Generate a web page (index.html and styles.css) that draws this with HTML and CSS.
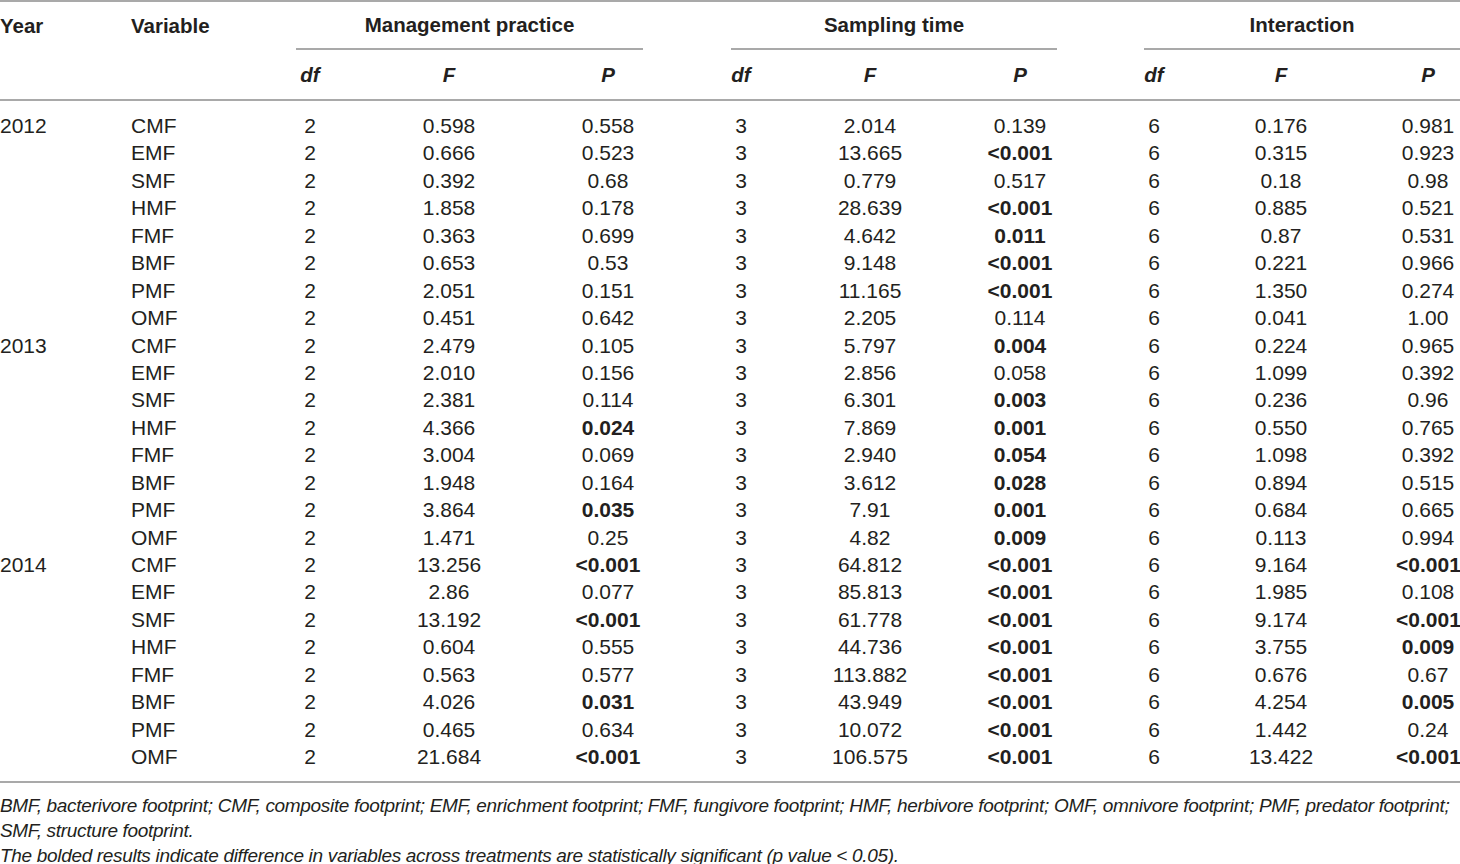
FILE: index.html
```html
<!DOCTYPE html>
<html lang="en">
<head>
    <meta charset="UTF-8">
    <title>Nematode metabolic footprints – ANOVA</title>
    <meta name="viewport" content="width=device-width, initial-scale=1">
    <link rel="stylesheet" href="styles.css">
</head>
<body>
    <table class="anova">
        <colgroup>
            <col class="c-year"><col class="c-var">
            <col class="c-df1"><col class="c-f1"><col class="c-p1">
            <col class="c-df2"><col class="c-f2"><col class="c-p2">
            <col class="c-df3"><col class="c-f3"><col class="c-p3">
        </colgroup>
        <thead>
            <tr class="head-top">
                <th class="left">Year</th>
                <th class="left">Variable</th>
                <th colspan="3"><div class="grp grp-mp">Management practice</div></th>
                <th colspan="3"><div class="grp grp-st">Sampling time</div></th>
                <th colspan="3"><div class="grp grp-in">Interaction</div></th>
            </tr>
            <tr class="head-sub">
                <th></th>
                <th></th>
                <th class="df"><i>df</i></th><th><i>F</i></th><th><i>P</i></th>
                <th class="df"><i>df</i></th><th><i>F</i></th><th><i>P</i></th>
                <th class="df"><i>df</i></th><th><i>F</i></th><th class="last"><i>P</i></th>
            </tr>
        </thead>
        <tbody>
            <tr class="first">
                <td class="left">2012</td><td class="left">CMF</td>
                <td>2</td><td>0.598</td><td>0.558</td>
                <td>3</td><td>2.014</td><td>0.139</td>
                <td>6</td><td>0.176</td><td class="last">0.981</td>
            </tr>
            <tr>
                <td></td><td class="left">EMF</td>
                <td>2</td><td>0.666</td><td>0.523</td>
                <td>3</td><td>13.665</td><td><b>&lt;0.001</b></td>
                <td>6</td><td>0.315</td><td class="last">0.923</td>
            </tr>
            <tr>
                <td></td><td class="left">SMF</td>
                <td>2</td><td>0.392</td><td>0.68</td>
                <td>3</td><td>0.779</td><td>0.517</td>
                <td>6</td><td>0.18</td><td class="last">0.98</td>
            </tr>
            <tr>
                <td></td><td class="left">HMF</td>
                <td>2</td><td>1.858</td><td>0.178</td>
                <td>3</td><td>28.639</td><td><b>&lt;0.001</b></td>
                <td>6</td><td>0.885</td><td class="last">0.521</td>
            </tr>
            <tr>
                <td></td><td class="left">FMF</td>
                <td>2</td><td>0.363</td><td>0.699</td>
                <td>3</td><td>4.642</td><td><b>0.011</b></td>
                <td>6</td><td>0.87</td><td class="last">0.531</td>
            </tr>
            <tr>
                <td></td><td class="left">BMF</td>
                <td>2</td><td>0.653</td><td>0.53</td>
                <td>3</td><td>9.148</td><td><b>&lt;0.001</b></td>
                <td>6</td><td>0.221</td><td class="last">0.966</td>
            </tr>
            <tr>
                <td></td><td class="left">PMF</td>
                <td>2</td><td>2.051</td><td>0.151</td>
                <td>3</td><td>11.165</td><td><b>&lt;0.001</b></td>
                <td>6</td><td>1.350</td><td class="last">0.274</td>
            </tr>
            <tr>
                <td></td><td class="left">OMF</td>
                <td>2</td><td>0.451</td><td>0.642</td>
                <td>3</td><td>2.205</td><td>0.114</td>
                <td>6</td><td>0.041</td><td class="last">1.00</td>
            </tr>
            <tr>
                <td class="left">2013</td><td class="left">CMF</td>
                <td>2</td><td>2.479</td><td>0.105</td>
                <td>3</td><td>5.797</td><td><b>0.004</b></td>
                <td>6</td><td>0.224</td><td class="last">0.965</td>
            </tr>
            <tr>
                <td></td><td class="left">EMF</td>
                <td>2</td><td>2.010</td><td>0.156</td>
                <td>3</td><td>2.856</td><td>0.058</td>
                <td>6</td><td>1.099</td><td class="last">0.392</td>
            </tr>
            <tr>
                <td></td><td class="left">SMF</td>
                <td>2</td><td>2.381</td><td>0.114</td>
                <td>3</td><td>6.301</td><td><b>0.003</b></td>
                <td>6</td><td>0.236</td><td class="last">0.96</td>
            </tr>
            <tr>
                <td></td><td class="left">HMF</td>
                <td>2</td><td>4.366</td><td><b>0.024</b></td>
                <td>3</td><td>7.869</td><td><b>0.001</b></td>
                <td>6</td><td>0.550</td><td class="last">0.765</td>
            </tr>
            <tr>
                <td></td><td class="left">FMF</td>
                <td>2</td><td>3.004</td><td>0.069</td>
                <td>3</td><td>2.940</td><td><b>0.054</b></td>
                <td>6</td><td>1.098</td><td class="last">0.392</td>
            </tr>
            <tr>
                <td></td><td class="left">BMF</td>
                <td>2</td><td>1.948</td><td>0.164</td>
                <td>3</td><td>3.612</td><td><b>0.028</b></td>
                <td>6</td><td>0.894</td><td class="last">0.515</td>
            </tr>
            <tr>
                <td></td><td class="left">PMF</td>
                <td>2</td><td>3.864</td><td><b>0.035</b></td>
                <td>3</td><td>7.91</td><td><b>0.001</b></td>
                <td>6</td><td>0.684</td><td class="last">0.665</td>
            </tr>
            <tr>
                <td></td><td class="left">OMF</td>
                <td>2</td><td>1.471</td><td>0.25</td>
                <td>3</td><td>4.82</td><td><b>0.009</b></td>
                <td>6</td><td>0.113</td><td class="last">0.994</td>
            </tr>
            <tr>
                <td class="left">2014</td><td class="left">CMF</td>
                <td>2</td><td>13.256</td><td><b>&lt;0.001</b></td>
                <td>3</td><td>64.812</td><td><b>&lt;0.001</b></td>
                <td>6</td><td>9.164</td><td class="last"><b>&lt;0.001</b></td>
            </tr>
            <tr>
                <td></td><td class="left">EMF</td>
                <td>2</td><td>2.86</td><td>0.077</td>
                <td>3</td><td>85.813</td><td><b>&lt;0.001</b></td>
                <td>6</td><td>1.985</td><td class="last">0.108</td>
            </tr>
            <tr>
                <td></td><td class="left">SMF</td>
                <td>2</td><td>13.192</td><td><b>&lt;0.001</b></td>
                <td>3</td><td>61.778</td><td><b>&lt;0.001</b></td>
                <td>6</td><td>9.174</td><td class="last"><b>&lt;0.001</b></td>
            </tr>
            <tr>
                <td></td><td class="left">HMF</td>
                <td>2</td><td>0.604</td><td>0.555</td>
                <td>3</td><td>44.736</td><td><b>&lt;0.001</b></td>
                <td>6</td><td>3.755</td><td class="last"><b>0.009</b></td>
            </tr>
            <tr>
                <td></td><td class="left">FMF</td>
                <td>2</td><td>0.563</td><td>0.577</td>
                <td>3</td><td>113.882</td><td><b>&lt;0.001</b></td>
                <td>6</td><td>0.676</td><td class="last">0.67</td>
            </tr>
            <tr>
                <td></td><td class="left">BMF</td>
                <td>2</td><td>4.026</td><td><b>0.031</b></td>
                <td>3</td><td>43.949</td><td><b>&lt;0.001</b></td>
                <td>6</td><td>4.254</td><td class="last"><b>0.005</b></td>
            </tr>
            <tr>
                <td></td><td class="left">PMF</td>
                <td>2</td><td>0.465</td><td>0.634</td>
                <td>3</td><td>10.072</td><td><b>&lt;0.001</b></td>
                <td>6</td><td>1.442</td><td class="last">0.24</td>
            </tr>
            <tr class="final">
                <td></td><td class="left">OMF</td>
                <td>2</td><td>21.684</td><td><b>&lt;0.001</b></td>
                <td>3</td><td>106.575</td><td><b>&lt;0.001</b></td>
                <td>6</td><td>13.422</td><td class="last"><b>&lt;0.001</b></td>
            </tr>
        </tbody>
    </table>

    <div class="notes">
        <p><span class="line">BMF, bacterivore footprint; CMF, composite footprint; EMF, enrichment footprint; FMF, fungivore footprint; HMF, herbivore footprint; OMF, omnivore footprint; PMF, predator footprint;</span><br>SMF, structure footprint.</p>
        <p>The bolded results indicate difference in variables across treatments are statistically significant (p value &lt; 0.05).</p>
    </div>
</body>
</html>
```

FILE: styles.css
```css
body {
    margin: 0;
    padding: 0;
    background: #fff;
    color: #231f20;
    font-family: 'Liberation Sans', Arial, sans-serif;
}
.anova {
    width: 1460px;
    table-layout: fixed;
    border-collapse: collapse;
    border-spacing: 0;
    border-top: 2px solid #a9a9a9;
}
.c-year { width: 131px; }
.c-var { width: 109px; }
.c-df1 { width: 140px; }
.c-f1 { width: 138px; }
.c-p1 { width: 180px; }
.c-df2 { width: 86px; }
.c-f2 { width: 172px; }
.c-p2 { width: 128px; }
.c-df3 { width: 140px; }
.c-f3 { width: 114px; }
.c-p3 { width: 122px; }

th, td {
    padding: 0;
    text-align: center;
    white-space: nowrap;
}
th {
    font-weight: bold;
    font-size: 20.5px;
}
.left {
    text-align: left;
}
.last {
    padding-left: 58px;
}

/* header rows */
.head-top th {
    height: 48px;
    line-height: 48px;
    vertical-align: top;
}
.grp {
    border-bottom: 2px solid #a9a9a9;
    line-height: 46px;
}
.grp-mp { margin: 0 55px 0 56px; }
.grp-st { margin: 0 27px 0 33px; }
.grp-in { margin: 0 0 0 60px; }
.head-sub th {
    height: 49px;
    line-height: 49px;
    border-bottom: 2px solid #a9a9a9;
}

/* body rows */
td {
    line-height: 27.43px;
    font-size: 21px;
}
tr.first td {
    padding-top: 11px;
}
tr.final td {
    padding-bottom: 10px;
    border-bottom: 2px solid #a9a9a9;
}
td b {
    font-weight: bold;
}

.notes {
    margin-top: 10px;
    font-style: italic;
    font-size: 19px;
    letter-spacing: -0.32px;
    line-height: 25px;
}
.notes p {
    margin: 0;
}
.notes .line {
    white-space: nowrap;
}
```
